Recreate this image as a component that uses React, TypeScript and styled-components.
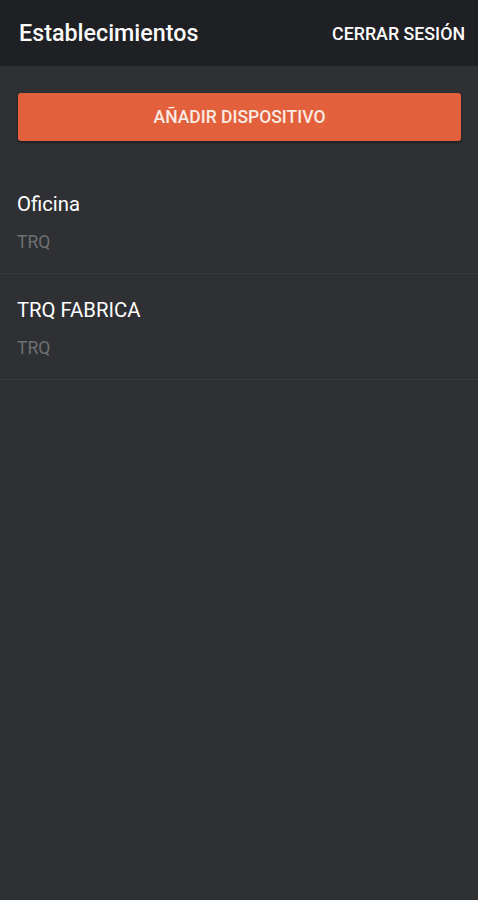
import React from "react";
import styled, { createGlobalStyle } from "styled-components";

const Global = createGlobalStyle`
  html, body { margin: 0; padding: 0; background: #2f3034; }
  body { font-family: Roboto, "Noto Sans", sans-serif; }
  * { box-sizing: border-box; }
`;

const Screen = styled.div`
  width: 478px;
  min-height: 900px;
  background: #2f3034;
  display: flex;
  flex-direction: column;
`;

const Header = styled.header`
  height: 66px;
  background: #1f2023;
  display: flex;
  align-items: center;
  justify-content: space-between;
  padding: 0 13px 0 19px;
`;

const Title = styled.h1`
  margin: 0;
  font-size: 23.3px;
  font-weight: 500;
  color: #ffffff;
`;

const HeaderAction = styled.button`
  background: none;
  border: none;
  padding: 0;
  color: #ffffff;
  font-family: inherit;
  font-size: 17.8px;
  font-weight: 500;
`;

const Content = styled.main`
  padding: 27px 17px 0 18px;
`;

const PrimaryButton = styled.button`
  width: 100%;
  height: 48px;
  border: none;
  border-radius: 3px;
  background: #e2613c;
  color: #fbe9e3;
  font-family: inherit;
  font-size: 17.5px;
  font-weight: 500;
  box-shadow: 0 1px 3px rgba(0, 0, 0, 0.5);
`;

const List = styled.ul`
  list-style: none;
  margin: 27px 0 0;
  padding: 0;
`;

const Item = styled.li`
  height: 106px;
  padding: 24px 17px 0;
  border-bottom: 1px solid #38393d;
  display: flex;
  flex-direction: column;
  gap: 15px;
`;

const ItemName = styled.span`
  font-size: 20.3px;
  color: #ffffff;
  line-height: 24px;
`;

const ItemSub = styled.span`
  font-size: 17.6px;
  color: #6e6f73;
  line-height: 22px;
`;

const items = [
  { name: "Oficina", sub: "TRQ" },
  { name: "TRQ FABRICA", sub: "TRQ" },
];

export default function App() {
  return (
    <>
      <Global />
      <Screen>
        <Header>
          <Title>Establecimientos</Title>
          <HeaderAction>CERRAR SESIÓN</HeaderAction>
        </Header>
        <Content>
          <PrimaryButton>AÑADIR DISPOSITIVO</PrimaryButton>
        </Content>
        <List>
          {items.map((it) => (
            <Item key={it.name}>
              <ItemName>{it.name}</ItemName>
              <ItemSub>{it.sub}</ItemSub>
            </Item>
          ))}
        </List>
      </Screen>
    </>
  );
}
